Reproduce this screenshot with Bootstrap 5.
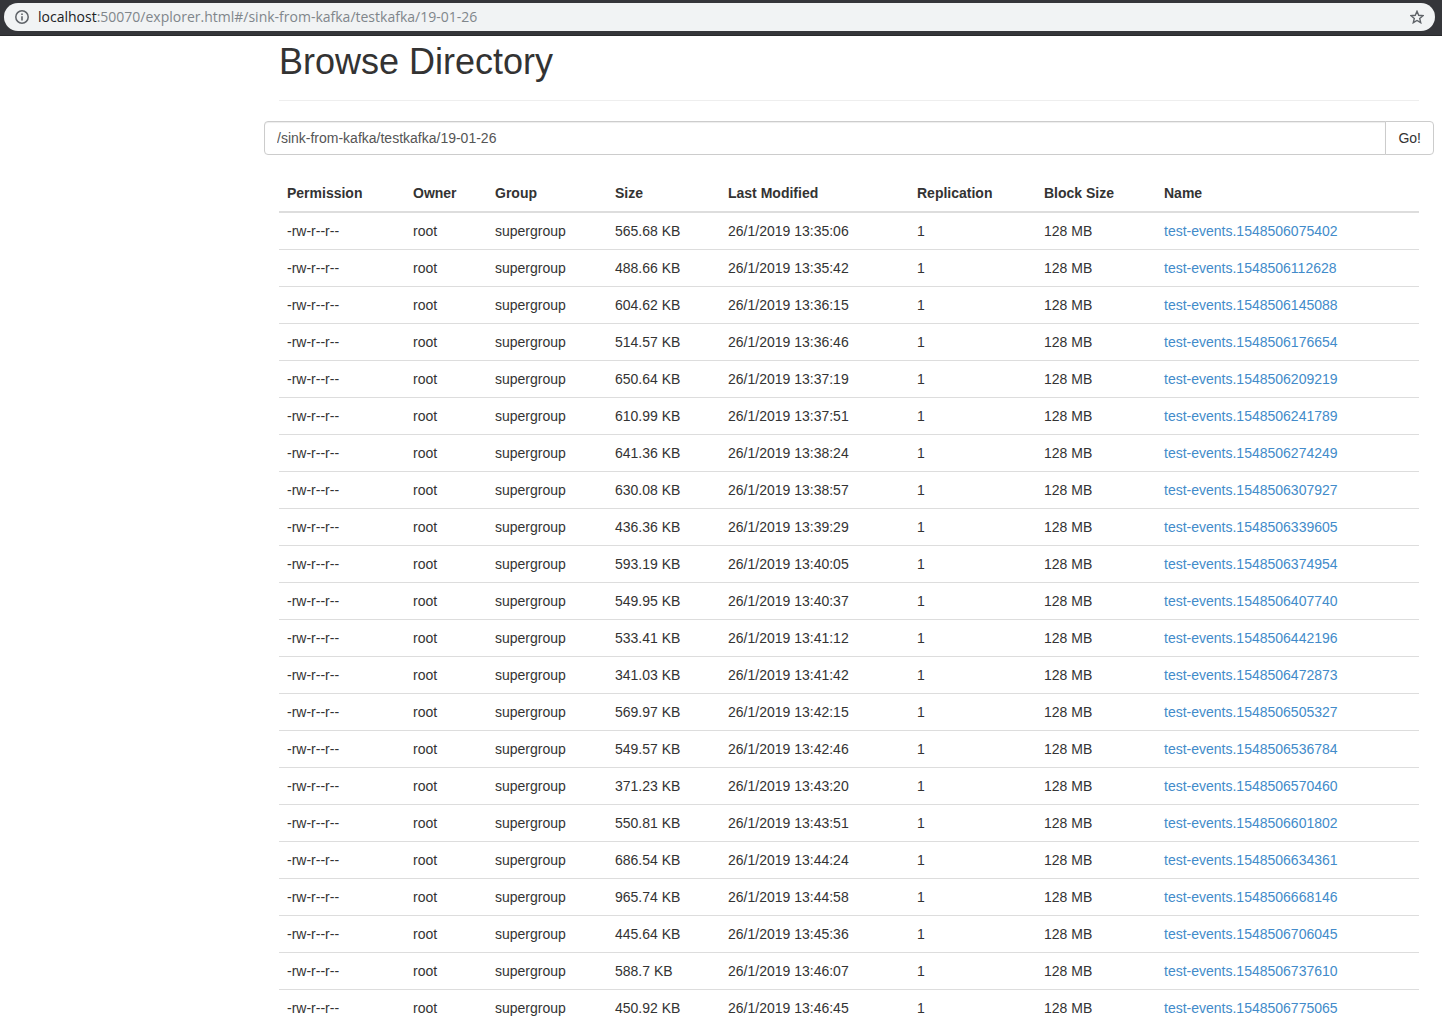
<!DOCTYPE html>
<html lang="en">
<head>
<meta charset="utf-8">
<meta name="viewport" content="width=device-width, initial-scale=1">
<title>Browsing HDFS</title>
<link rel="stylesheet" href="https://cdn.jsdelivr.net/npm/bootstrap@5.3.0/dist/css/bootstrap.min.css">
<style>
body { font: 14px/20px "Liberation Sans", Arial, sans-serif; color: #333; background: #fff; }
.browser-bar { background: #35363a; height: 36px; border-bottom: 1px solid #28292b; padding: 0 7px 1px 4px; }
.omnibox { background: #f1f3f4; height: 28px; padding: 0 11px; color: #80868b; font: 14px/20px "Open Sans", "Noto Sans", sans-serif; }
.omnibox label { color: #202124; margin-left: 9px; }
.omnibox input { border: 0; outline: 0; background: transparent; padding: 0; color: inherit; font: inherit; min-width: 0; }
.omnibox button { line-height: 0; }
.page { min-height: 0; scrollbar-width: none; }
.page::-webkit-scrollbar { display: none; }
.explorer { margin: 0 8px 0 264px; padding: 6px 0 20px; }
.inset { margin: 0 15px; }
.page-title { border-bottom: 1px solid #eee; padding-bottom: 18px; margin-bottom: 20px; }
.page-title h1 { font-size: 36px; line-height: 40px; font-weight: 400; margin: 0; }
.path-box { margin-bottom: 20px; }
.path-box .form-control { height: 34px; padding: 6px 12px; font-size: 14px; line-height: 20px; color: #555; border-color: #ccc; border-radius: 4px; box-shadow: inset 0 1px 1px rgba(0,0,0,.075); }
.path-box .btn { padding: 6px 12px; font-size: 14px; line-height: 20px; color: #333; background: #fff; border-color: #ccc; border-radius: 4px; }
.files { table-layout: fixed; margin: 0; color: #333; border-color: #ddd; }
.files > :not(caption) > * > * { padding: 8px; color: #333; border-width: 0 0 1px; }
.files > thead > tr > th { border-bottom: 2px solid #ddd; }
.files a { color: #428bca; text-decoration: none; }
.files a:hover { color: #2a6496; text-decoration: underline; }
.c-perm { width: 126px; } .c-owner { width: 82px; } .c-group { width: 120px; } .c-size { width: 113px; }
.c-date { width: 189px; } .c-rep { width: 127px; } .c-block { width: 120px; }
</style>
<script src="https://cdn.jsdelivr.net/npm/bootstrap@5.3.0/dist/js/bootstrap.bundle.min.js"></script>
</head>
<body class="vh-100 d-flex flex-column overflow-hidden">
<header class="browser-bar d-flex align-items-center flex-shrink-0">
  <div class="omnibox rounded-pill d-flex align-items-center flex-grow-1">
    <svg width="14" height="14" viewBox="0 0 14 14" aria-hidden="true"><circle cx="7" cy="7" r="6.2" fill="none" stroke="#5f6368" stroke-width="1.5"/><path d="M6.2 6.2h1.6v4.3H6.2zM6.2 3.5h1.6v1.6H6.2z" fill="#5f6368"/></svg>
    <label for="url">localhost</label><input id="url" class="flex-grow-1" type="text" value=":50070/explorer.html#/sink-from-kafka/testkafka/19-01-26">
    <button type="button" class="border-0 bg-transparent p-0" aria-label="Bookmark this page"><svg width="14" height="14" viewBox="0 0 14 14"><path d="M7 1.300l1.700 4 4.300.4-3.300 2.800 1 4.200L7 10.500l-3.700 2.200 1-4.200L1 5.700l4.300-.4z" fill="none" stroke="#5f6368" stroke-width="1.400"/></svg></button>
  </div>
</header>
<main class="page flex-grow-1 overflow-auto">
<div class="explorer">
  <div class="page-title inset"><h1>Browse Directory</h1></div>
  <form class="path-box input-group">
    <input type="text" class="form-control" aria-label="Directory" value="/sink-from-kafka/testkafka/19-01-26">
    <button type="button" class="btn">Go!</button>
  </form>
  <div class="inset">
  <table class="table files">
    <colgroup><col class="c-perm"><col class="c-owner"><col class="c-group"><col class="c-size"><col class="c-date"><col class="c-rep"><col class="c-block"><col></colgroup>
    <thead><tr><th>Permission</th><th>Owner</th><th>Group</th><th>Size</th><th>Last Modified</th><th>Replication</th><th>Block Size</th><th>Name</th></tr></thead>
    <tbody>
      <tr><td>-rw-r--r--</td><td>root</td><td>supergroup</td><td>565.68 KB</td><td>26/1/2019 13:35:06</td><td>1</td><td>128 MB</td><td><a href="#">test-events.1548506075402</a></td></tr>
      <tr><td>-rw-r--r--</td><td>root</td><td>supergroup</td><td>488.66 KB</td><td>26/1/2019 13:35:42</td><td>1</td><td>128 MB</td><td><a href="#">test-events.1548506112628</a></td></tr>
      <tr><td>-rw-r--r--</td><td>root</td><td>supergroup</td><td>604.62 KB</td><td>26/1/2019 13:36:15</td><td>1</td><td>128 MB</td><td><a href="#">test-events.1548506145088</a></td></tr>
      <tr><td>-rw-r--r--</td><td>root</td><td>supergroup</td><td>514.57 KB</td><td>26/1/2019 13:36:46</td><td>1</td><td>128 MB</td><td><a href="#">test-events.1548506176654</a></td></tr>
      <tr><td>-rw-r--r--</td><td>root</td><td>supergroup</td><td>650.64 KB</td><td>26/1/2019 13:37:19</td><td>1</td><td>128 MB</td><td><a href="#">test-events.1548506209219</a></td></tr>
      <tr><td>-rw-r--r--</td><td>root</td><td>supergroup</td><td>610.99 KB</td><td>26/1/2019 13:37:51</td><td>1</td><td>128 MB</td><td><a href="#">test-events.1548506241789</a></td></tr>
      <tr><td>-rw-r--r--</td><td>root</td><td>supergroup</td><td>641.36 KB</td><td>26/1/2019 13:38:24</td><td>1</td><td>128 MB</td><td><a href="#">test-events.1548506274249</a></td></tr>
      <tr><td>-rw-r--r--</td><td>root</td><td>supergroup</td><td>630.08 KB</td><td>26/1/2019 13:38:57</td><td>1</td><td>128 MB</td><td><a href="#">test-events.1548506307927</a></td></tr>
      <tr><td>-rw-r--r--</td><td>root</td><td>supergroup</td><td>436.36 KB</td><td>26/1/2019 13:39:29</td><td>1</td><td>128 MB</td><td><a href="#">test-events.1548506339605</a></td></tr>
      <tr><td>-rw-r--r--</td><td>root</td><td>supergroup</td><td>593.19 KB</td><td>26/1/2019 13:40:05</td><td>1</td><td>128 MB</td><td><a href="#">test-events.1548506374954</a></td></tr>
      <tr><td>-rw-r--r--</td><td>root</td><td>supergroup</td><td>549.95 KB</td><td>26/1/2019 13:40:37</td><td>1</td><td>128 MB</td><td><a href="#">test-events.1548506407740</a></td></tr>
      <tr><td>-rw-r--r--</td><td>root</td><td>supergroup</td><td>533.41 KB</td><td>26/1/2019 13:41:12</td><td>1</td><td>128 MB</td><td><a href="#">test-events.1548506442196</a></td></tr>
      <tr><td>-rw-r--r--</td><td>root</td><td>supergroup</td><td>341.03 KB</td><td>26/1/2019 13:41:42</td><td>1</td><td>128 MB</td><td><a href="#">test-events.1548506472873</a></td></tr>
      <tr><td>-rw-r--r--</td><td>root</td><td>supergroup</td><td>569.97 KB</td><td>26/1/2019 13:42:15</td><td>1</td><td>128 MB</td><td><a href="#">test-events.1548506505327</a></td></tr>
      <tr><td>-rw-r--r--</td><td>root</td><td>supergroup</td><td>549.57 KB</td><td>26/1/2019 13:42:46</td><td>1</td><td>128 MB</td><td><a href="#">test-events.1548506536784</a></td></tr>
      <tr><td>-rw-r--r--</td><td>root</td><td>supergroup</td><td>371.23 KB</td><td>26/1/2019 13:43:20</td><td>1</td><td>128 MB</td><td><a href="#">test-events.1548506570460</a></td></tr>
      <tr><td>-rw-r--r--</td><td>root</td><td>supergroup</td><td>550.81 KB</td><td>26/1/2019 13:43:51</td><td>1</td><td>128 MB</td><td><a href="#">test-events.1548506601802</a></td></tr>
      <tr><td>-rw-r--r--</td><td>root</td><td>supergroup</td><td>686.54 KB</td><td>26/1/2019 13:44:24</td><td>1</td><td>128 MB</td><td><a href="#">test-events.1548506634361</a></td></tr>
      <tr><td>-rw-r--r--</td><td>root</td><td>supergroup</td><td>965.74 KB</td><td>26/1/2019 13:44:58</td><td>1</td><td>128 MB</td><td><a href="#">test-events.1548506668146</a></td></tr>
      <tr><td>-rw-r--r--</td><td>root</td><td>supergroup</td><td>445.64 KB</td><td>26/1/2019 13:45:36</td><td>1</td><td>128 MB</td><td><a href="#">test-events.1548506706045</a></td></tr>
      <tr><td>-rw-r--r--</td><td>root</td><td>supergroup</td><td>588.7 KB</td><td>26/1/2019 13:46:07</td><td>1</td><td>128 MB</td><td><a href="#">test-events.1548506737610</a></td></tr>
      <tr><td>-rw-r--r--</td><td>root</td><td>supergroup</td><td>450.92 KB</td><td>26/1/2019 13:46:45</td><td>1</td><td>128 MB</td><td><a href="#">test-events.1548506775065</a></td></tr>
    </tbody>
  </table>
  </div>
</div>
</main>
</body>
</html>
